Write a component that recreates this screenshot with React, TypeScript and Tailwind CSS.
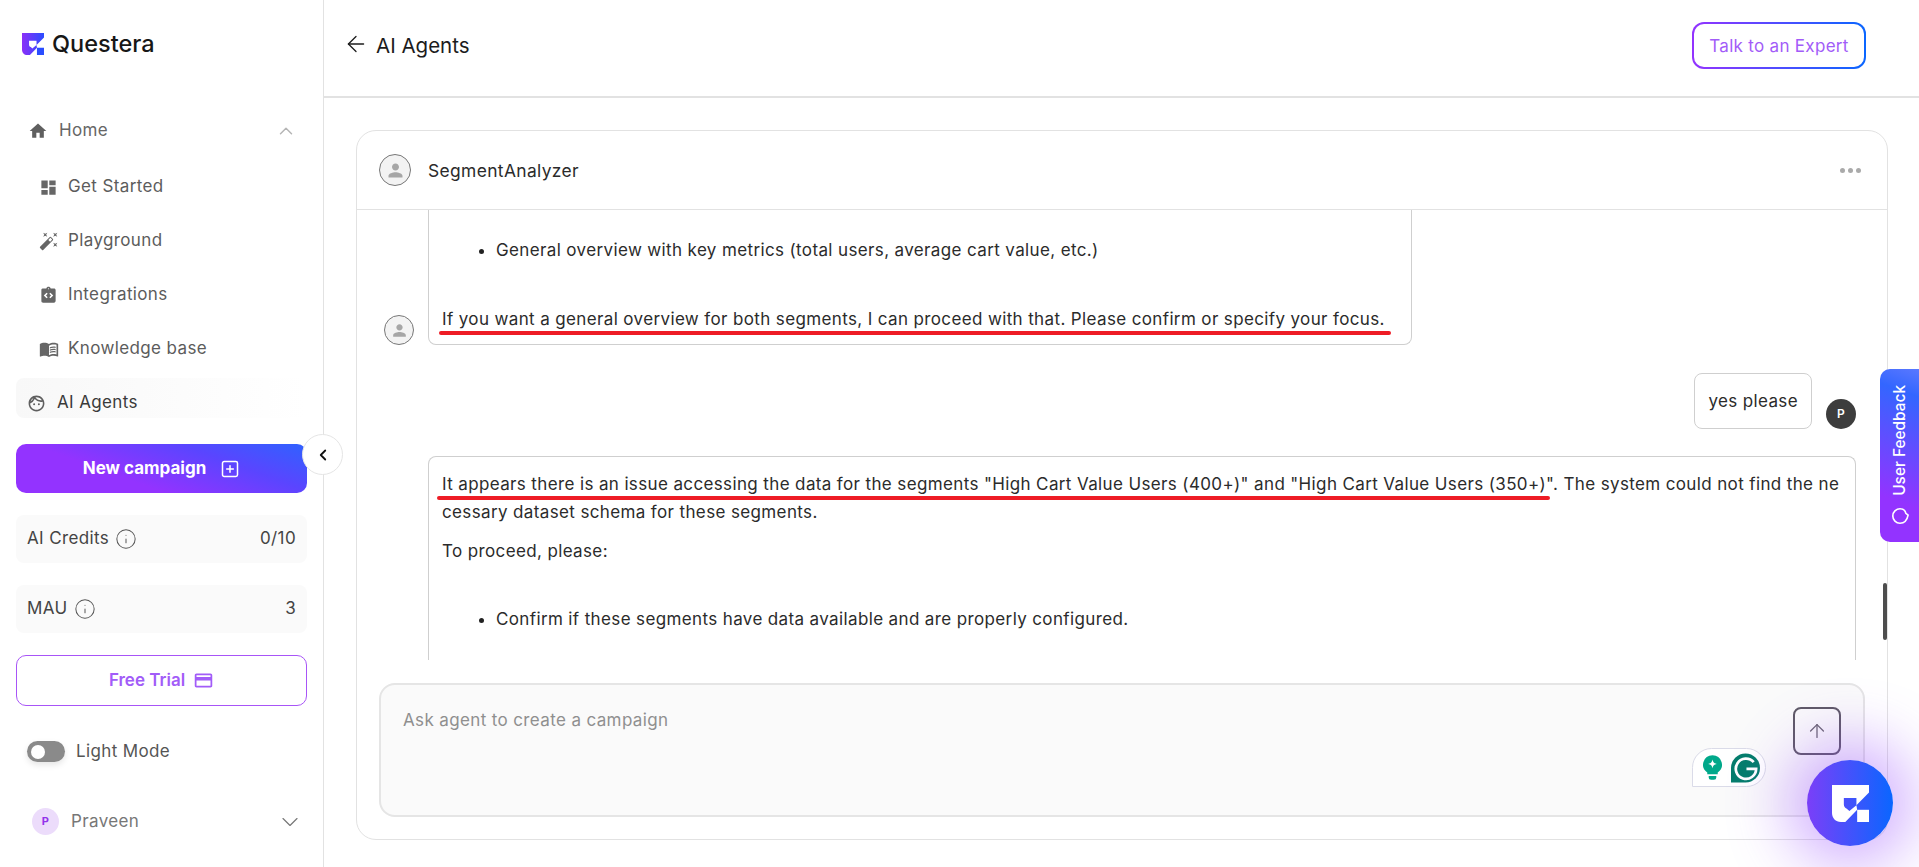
import { ArrowLeft, ArrowUp, ChevronDown, ChevronLeft, ChevronUp, Info, SquarePlus } from "lucide-react";
import { MdAutoFixHigh, MdDashboard, MdHome, MdIntegrationInstructions, MdMenuBook, MdOutlineCreditCard, MdOutlineFace, MdPerson } from "react-icons/md";

const fontStack = "font-['Inter','Liberation_Sans',sans-serif]";

function LogoMark({ className, tone }: { className: string; tone: "brand" | "white" }) {
  const fill = tone === "white" ? "#fff" : "url(#logoFill)";
  return (
    <svg viewBox="0 0 100 100" className={className}>
      <defs>
        <linearGradient id="logoFill" x1="0" y1="0" x2="1" y2="0">
          <stop offset="0" stopColor="#8b2ff8" />
          <stop offset="1" stopColor="#2a4dff" />
        </linearGradient>
      </defs>
      <path fill={fill} d="M0 0H100V20L66 55V35H32V52C32 58 35 62 40 64L47 70L66 55L68 67L36 100H24C10 100 0 90 0 76Z" />
      <path fill={tone === "white" ? "#fff" : "#2a4dff"} d="M68 67H100V100H68Z" />
    </svg>
  );
}

function NavChild({ icon, label }: { icon: React.ReactNode; label: string }) {
  return (
    <div className="flex h-[54px] items-center pl-[23px] text-[#5c5c5c]">
      <span className="flex w-[29px] text-[#666]">{icon}</span>
      {label}
    </div>
  );
}

function Stat({ label, value }: { label: string; value: string }) {
  return (
    <div className="flex h-[48px] items-center justify-between rounded-lg bg-[#fafafa] px-[11px] text-[#444]">
      <span className="flex items-center gap-[6px]">
        {label}
        <Info size={22} strokeWidth={1.1} className="text-[#555]" />
      </span>
      {value}
    </div>
  );
}

function Sidebar() {
  return (
    <aside className="relative flex h-full w-[324px] shrink-0 flex-col border-r border-[#e2e2e2] px-[16px]">
      <div className="flex h-[88px] items-center gap-[8px] pl-[6px]">
        <LogoMark tone="brand" className="h-[22px] w-[22px]" />
        <span className="text-[23.5px] font-medium tracking-normal text-[#171717]">Questera</span>
      </div>
      <div className="mt-[15px] flex h-[54px] items-center pl-[12px] pr-[10px] pt-[1px] text-[#666]">
        <MdHome size={20} className="mr-[11px] text-[#5f5f5f]" />
        <span className="flex-1">Home</span>
        <ChevronUp size={22} strokeWidth={1.6} className="text-[#b5b5b5]" />
      </div>
      <div className="mt-[3px]">
        <NavChild icon={<MdDashboard size={19} />} label="Get Started" />
        <NavChild icon={<MdAutoFixHigh size={20} />} label="Playground" />
        <NavChild icon={<MdIntegrationInstructions size={19} />} label="Integrations" />
        <NavChild icon={<MdMenuBook size={20} />} label="Knowledge base" />
      </div>
      <div className="mt-[2px] flex h-[40px] items-center rounded-lg bg-[linear-gradient(90deg,#f8f8f8,#ffffff)] pl-[11px] pt-[10px] text-[#3a3a3a]">
        <MdOutlineFace size={19} className="mr-[11px] text-[#5f5f5f]" />
        AI Agents
      </div>
      <button className="mt-[26px] flex h-[49px] items-center justify-center gap-[14px] rounded-[10px] bg-[linear-gradient(20deg,#9333ff_0%,#9333ff_35%,#5a45ff_70%,#2f62ff_100%)] font-bold tracking-normal text-white">
        New campaign
        <SquarePlus size={20} strokeWidth={1.8} />
      </button>
      <div className="mt-[22px] flex flex-col gap-[22px]">
        <Stat label="AI Credits" value="0/10" />
        <Stat label="MAU" value="3" />
      </div>
      <button className="mt-[22px] flex h-[51px] items-center justify-center gap-[8px] rounded-[10px] border border-[#a855f7] font-semibold tracking-normal text-[#a25cf8]">
        Free Trial
        <MdOutlineCreditCard size={21} />
      </button>
      <div className="mt-[35px] flex h-[21px] items-center gap-[11px] pl-[11px] text-[#555]">
        <span className="flex h-[21px] w-[38px] items-center rounded-full bg-[#8a8a8a] pl-[4px] shadow-[0_3px_6px_rgba(0,0,0,0.1)]">
          <span className="h-[14px] w-[14px] rounded-full bg-white" />
        </span>
        Light Mode
      </div>
      <div className="mt-[46px] flex h-[27px] items-center pl-[16px] pr-[3px] text-[#777]">
        <span className="mr-[12px] flex h-[27px] w-[27px] items-center justify-center rounded-full bg-[#ecdcfb] text-[11px] font-bold text-[#9333ea]">P</span>
        <span className="flex-1">Praveen</span>
        <ChevronDown size={28} strokeWidth={1} className="text-[#777]" />
      </div>
      <button className="absolute left-[302px] top-[434px] flex h-[41px] w-[41px] items-center justify-center rounded-full border border-[#e5e5e5] bg-white text-[#111]">
        <ChevronLeft size={18} strokeWidth={2.4} />
      </button>
    </aside>
  );
}

function AgentAvatar({ size }: { size: "lg" | "sm" }) {
  return (
    <span className={size === "lg"
      ? "flex h-[32px] w-[32px] shrink-0 items-center justify-center rounded-full border border-[#777] bg-[#f3f3f3] text-[#a6a6a6]"
      : "flex h-[30px] w-[30px] shrink-0 items-center justify-center rounded-full border border-[#777] bg-[#f3f3f3] text-[#a6a6a6]"}>
      <MdPerson size={size === "lg" ? 21 : 19} />
    </span>
  );
}

function Messages() {
  return (
    <div className="relative h-[450px] overflow-hidden pl-[27px] pr-[31px] leading-[28px] text-[#2b2b2b]">
      <div className="flex items-end gap-[14px]">
        <AgentAvatar size="sm" />
        <div className="w-[984px] rounded-b-lg border border-t-0 border-[#cfcfcf] px-[13px] pb-[11px] pt-[26px]">
          <ul className="list-disc pl-[54px]">
            <li className="marker:text-[#222]">General overview with key metrics (total users, average cart value, etc.)</li>
          </ul>
          <p className="relative mt-[41px] w-fit">
            If you want a general overview for both segments, I can proceed with that. Please confirm or specify your focus.
            <span className="absolute left-[-3px] right-[-6px] top-[26px] h-[4px] rounded-full bg-[#ee1c25]" />
          </p>
        </div>
      </div>
      <div className="mt-[28px] flex items-end justify-end gap-[14px]">
        <div className="flex h-[56px] items-center rounded-lg border border-[#cfcfcf] px-[13px]">yes please</div>
        <span className="flex h-[30px] w-[30px] items-center justify-center rounded-full bg-[#3d3d3d] text-[12px] font-semibold text-white">P</span>
      </div>
      <div className="ml-[44px] mt-[27px] rounded-t-lg border border-b-0 border-[#cfcfcf] px-[13px] pb-[60px] pt-[13px]">
        <p className="relative break-all">
          It appears there is an issue accessing the data for the segments "High Cart Value Users (400+)" and "High Cart Value Users (350+)". The system could not find the necessary dataset schema for these segments.
          <span className="absolute left-[-5px] top-[26px] h-[4px] w-[1113px] rounded-full bg-[#ee1c25]" />
        </p>
        <p className="mt-[11px]">To proceed, please:</p>
        <ul className="mt-[40px] list-disc pl-[54px]">
          <li className="marker:text-[#222]">Confirm if these segments have data available and are properly configured.</li>
        </ul>
      </div>
      <div className="absolute right-0 top-[373px] h-[57px] w-[4px] rounded-full bg-[#4d4d4d]" />
    </div>
  );
}

function GrammarlyBadge() {
  return (
    <div className="absolute bottom-[28px] right-[97px] flex h-[39px] w-[74px] items-center gap-[9px] rounded-[20px] rounded-bl-none border border-[#dadbe8] bg-white pl-[10px]">
      <svg viewBox="0 0 20 26" className="h-[25px] w-[19px]">
        <path fill="#00a88a" d="M10 0a10 10 0 0 1 5.5 18.3V20H4.5v-1.7A10 10 0 0 1 10 0ZM6 22h8v1.5a2.5 2.5 0 0 1-2.5 2.5h-3A2.5 2.5 0 0 1 6 23.5Z" />
        <path fill="#fff" d="M10 4.5c.6 3 1.5 4 4.5 4.7-3 .6-3.9 1.6-4.5 4.6-.6-3-1.5-4-4.5-4.6 3-.7 3.9-1.7 4.5-4.7Z" />
      </svg>
      <svg viewBox="0 0 30 30" className="h-[30px] w-[29px]">
        <path fill="#047d6c" d="M15 0a15 15 0 0 1 0 30H0V15A15 15 0 0 1 15 0Z" />
        <path fill="none" stroke="#fff" strokeWidth="2.8" d="M23.5 9a10.5 10.5 0 1 0 2.5 7H16" />
      </svg>
    </div>
  );
}

export default function App() {
  return (
    <div className={`relative flex h-screen w-full overflow-hidden bg-white text-[17px] tracking-[0.37px] ${fontStack}`}>
      <Sidebar />
      <main className="flex h-full min-w-0 flex-1 flex-col">
        <header className="flex h-[98px] shrink-0 items-center justify-between border-b-2 border-[#e2e2e2] pb-[6px] pl-[19px] pr-[53px]">
          <div className="flex translate-y-[1px] items-center gap-[7px] text-[20.5px] tracking-normal text-[#1c1c1c]">
            <ArrowLeft size={26} strokeWidth={1.2} className="-translate-y-[2px]" />
            AI Agents
          </div>
          <div className="rounded-[12px] bg-[linear-gradient(90deg,#9333ff,#0a66ff)] p-[2px]">
            <button className="flex h-[43px] w-[170px] items-center justify-center rounded-[10px] bg-white pt-[3px] tracking-[0.3px] text-[#a25cf8]">
              Talk to an Expert
            </button>
          </div>
        </header>
        <section className="ml-[32px] mt-[32px] flex h-[710px] w-[1532px] flex-col rounded-[20px] border border-[#e2e2e2]">
          <div className="flex h-[79px] shrink-0 items-center justify-between border-b border-[#e2e2e2] pl-[22px] pr-[26px]">
            <div className="flex items-center gap-[17px] text-[17.4px] text-[#2b2b2b]">
              <AgentAvatar size="lg" />
              <span className="pt-[2px]">SegmentAnalyzer</span>
            </div>
            <div className="flex gap-[3px]">
              <span className="h-[5px] w-[5px] rounded-full bg-[#aaa]" />
              <span className="h-[5px] w-[5px] rounded-full bg-[#aaa]" />
              <span className="h-[5px] w-[5px] rounded-full bg-[#aaa]" />
            </div>
          </div>
          <Messages />
          <div className="relative ml-[22px] mt-[23px] h-[134px] w-[1486px] rounded-[16px] border-2 border-[#e5e5e5] bg-[#fafafa] px-[22px] py-[23px] text-[#8f8f8f]">
            Ask agent to create a campaign
            <button className="absolute right-[22px] top-[22px] flex h-[48px] w-[48px] items-center justify-center rounded-lg border-2 border-[#5f5a66] text-[#6a6670]">
              <ArrowUp size={22} strokeWidth={1.4} />
            </button>
            <GrammarlyBadge />
          </div>
        </section>
      </main>
      <div className="absolute right-0 top-[369px] flex h-[173px] w-[39px] flex-col items-center justify-end gap-[11px] rounded-l-[10px] bg-[linear-gradient(200deg,#5a78ff_0%,#3366ff_15%,#9333ff_75%)] pb-[17px] text-white">
        <span className="rotate-180 text-[15.4px] font-medium tracking-normal [writing-mode:vertical-rl]">User Feedback</span>
        <svg viewBox="0 0 20 20" className="h-[18px] w-[18px] fill-none stroke-white stroke-[1.8]">
          <path d="M10 2C14 2 16 4.5 16.5 7L19 9C18 14 15 18 10 18A8 8 0 0 1 10 2Z" />
        </svg>
      </div>
      <div className="absolute left-[1807px] top-[760px] flex h-[86px] w-[86px] items-center justify-center rounded-full bg-[linear-gradient(90deg,#7b3ff8,#0a66ff)] shadow-[0_0_60px_20px_rgba(147,70,255,0.42)]">
        <LogoMark tone="white" className="h-[37px] w-[37px]" />
      </div>
    </div>
  );
}
